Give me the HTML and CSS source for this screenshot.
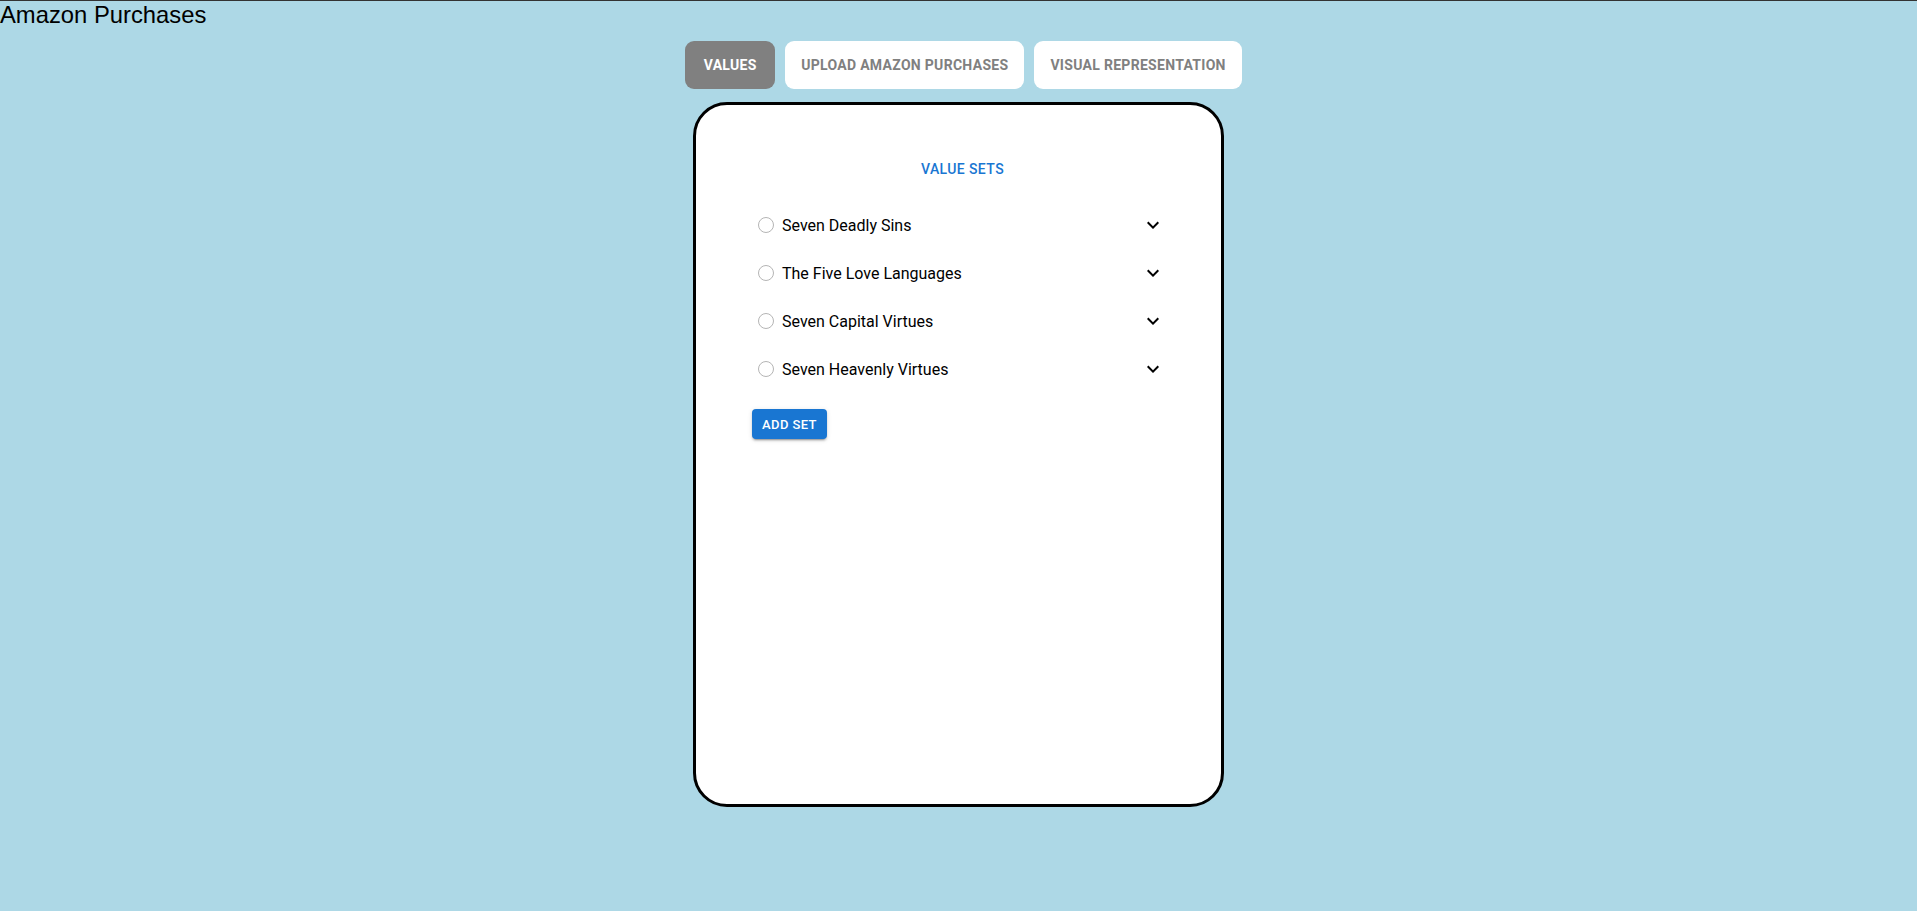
FILE: index.html
```html
<!DOCTYPE html>
<html>
<head>
<meta charset="utf-8">
<link rel="stylesheet" href="styles.css">
</head>
<body>
<div class="app-title">Amazon Purchases</div>
<nav class="tabs">
  <button class="tab tab-active">Values</button>
  <button class="tab">Upload Amazon Purchases</button>
  <button class="tab">Visual Representation</button>
</nav>
<main class="card">
  <div class="card-header">Value Sets</div>
  <ul class="set-list">
    <li class="set-row"><span class="radio"></span><span class="set-name">Seven Deadly Sins</span><svg class="chev" viewBox="0 0 24 24"><path d="M16.59 8.59 12 13.17 7.41 8.59 6 10l6 6 6-6z"/></svg></li>
    <li class="set-row"><span class="radio"></span><span class="set-name">The Five Love Languages</span><svg class="chev" viewBox="0 0 24 24"><path d="M16.59 8.59 12 13.17 7.41 8.59 6 10l6 6 6-6z"/></svg></li>
    <li class="set-row"><span class="radio"></span><span class="set-name">Seven Capital Virtues</span><svg class="chev" viewBox="0 0 24 24"><path d="M16.59 8.59 12 13.17 7.41 8.59 6 10l6 6 6-6z"/></svg></li>
    <li class="set-row"><span class="radio"></span><span class="set-name">Seven Heavenly Virtues</span><svg class="chev" viewBox="0 0 24 24"><path d="M16.59 8.59 12 13.17 7.41 8.59 6 10l6 6 6-6z"/></svg></li>
  </ul>
  <button class="add-btn">Add Set</button>
</main>
</body>
</html>
```
FILE: styles.css
```css
html, body {
  margin: 0;
  padding: 0;
}
body {
  background: #add8e6;
  border-top: 1px solid #333;
  min-height: 910px;
  font-family: Roboto, "Liberation Sans", sans-serif;
}
.app-title {
  font-family: "Liberation Sans", Arial, sans-serif;
  font-size: 23.8px;
  line-height: 27px;
  color: #000;
}
.tabs {
  display: flex;
  justify-content: center;
  gap: 10px;
  margin-top: 13px;
  padding-left: 10px;
}
.tab {
  height: 48px;
  min-width: 90px;
  border: none;
  border-radius: 9px;
  background: #fff;
  color: #808080;
  font-family: Roboto, sans-serif;
  font-size: 14px;
  font-weight: 700;
  letter-spacing: 0.3px;
  text-transform: uppercase;
  padding: 0 16px;
  cursor: pointer;
}
.tab-active {
  background: #808080;
  color: #fff;
}
.card {
  box-sizing: border-box;
  width: 531px;
  height: 705px;
  margin: 13px auto 0;
  background: #fff;
  border: 3px solid #000;
  border-radius: 34px;
  padding: 40px 56px 0;
}
.card-header {
  height: 48px;
  display: flex;
  align-items: center;
  justify-content: center;
  padding-left: 8px;
  color: #1976d2;
  font-size: 14px;
  font-weight: 500;
  letter-spacing: 0.4px;
  text-transform: uppercase;
}
.set-list {
  list-style: none;
  margin: 8px 0 0;
  padding: 0;
}
.set-row {
  height: 48px;
  display: flex;
  align-items: center;
  padding-left: 6px;
}
.radio {
  box-sizing: border-box;
  width: 16px;
  height: 16px;
  border: 1.5px solid #b5b5b5;
  border-radius: 50%;
  margin-right: 8px;
}
.set-name {
  flex: 1;
  font-size: 16px;
  color: #000;
}
.chev {
  width: 24px;
  height: 24px;
  fill: #000;
}
.add-btn {
  margin-top: 16px;
  height: 30px;
  padding: 0 10px;
  border: none;
  border-radius: 4px;
  background: #1976d2;
  color: #fff;
  font-family: Roboto, sans-serif;
  font-size: 13px;
  font-weight: 500;
  letter-spacing: 0.4px;
  text-transform: uppercase;
  box-shadow: 0 3px 1px -2px rgba(0,0,0,.2), 0 2px 2px 0 rgba(0,0,0,.14), 0 1px 5px 0 rgba(0,0,0,.12);
}
```
